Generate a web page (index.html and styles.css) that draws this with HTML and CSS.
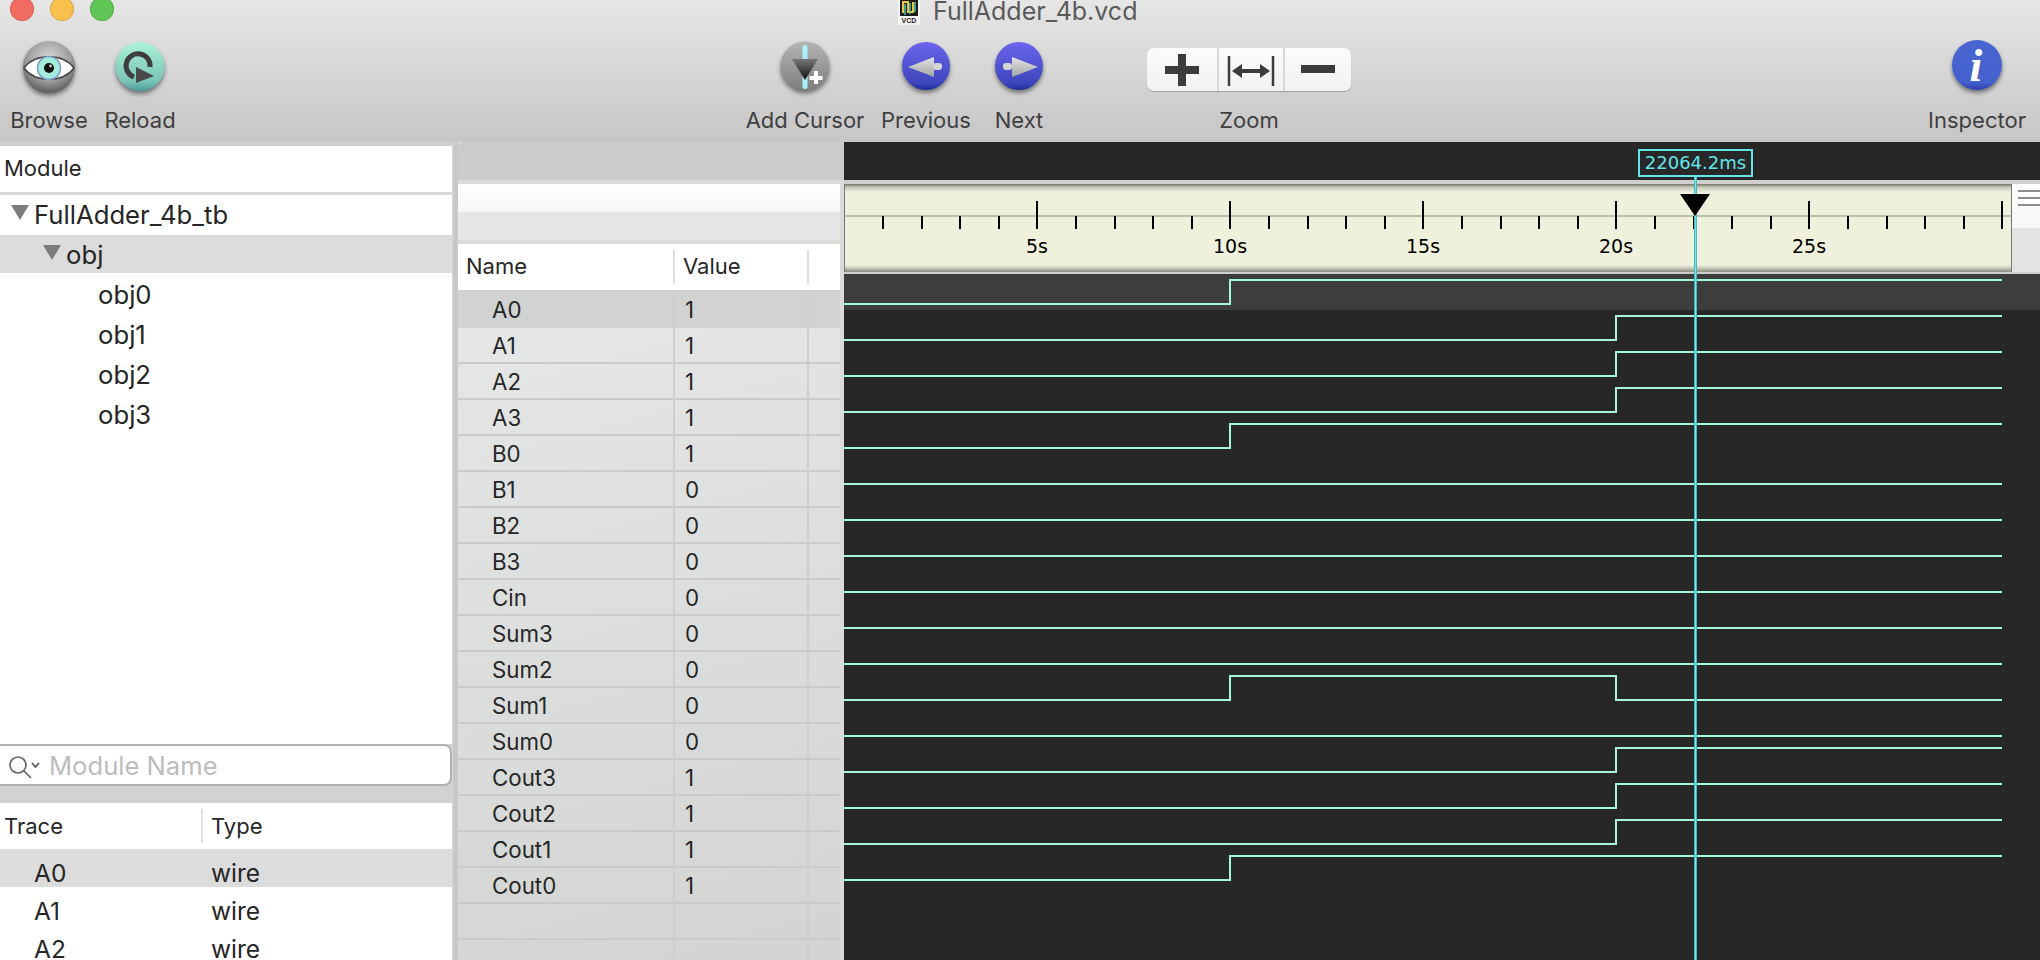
FILE: index.html
```html
<!DOCTYPE html>
<html lang="en">

<head>
    <meta charset="UTF-8">
    <meta name="viewport" content="width=device-width, initial-scale=1.0">
    <title>FullAdder_4b.vcd</title>
    <link rel="stylesheet" href="styles.css">
</head>

<body>
    <header class="toolbar">
        <div class="titlebar">
            <div class="lights">
                <span class="light red"></span>
                <span class="light yellow"></span>
                <span class="light green"></span>
            </div>
            <svg class="doc-icon" width="22" height="25" viewBox="0 0 22 25">
                <rect width="22" height="25" fill="#f4f4f4" />
                <rect x="2" y="0" width="18" height="16" fill="#1c1c1c" />
                <path d="M5 13V2H10V12H15V2" fill="none" stroke="#e8c83c" stroke-width="2" />
                <path d="M7 15V4M12 14V3M17 12V2" fill="none" stroke="#4fc4c0" stroke-width="1.5" />
                <text x="11" y="23" class="doc-text">VCD</text>
            </svg>
            <span class="title">FullAdder_4b.vcd</span>
        </div>

        <div class="tools">
            <div class="tool browse">
                <svg width="60" height="60" viewBox="0 0 60 60">
                    <defs>
                        <radialGradient id="ball" cx="50%" cy="35%" r="65%">
                            <stop offset="0" stop-color="#d8d8d8" />
                            <stop offset="0.65" stop-color="#9c9c9c" />
                            <stop offset="1" stop-color="#5c5c5c" />
                        </radialGradient>
                    </defs>
                    <circle cx="30" cy="27" r="26" fill="url(#ball)" class="shadow" />
                    <path d="M5 28C16 13 44 13 55 28C44 43 16 43 5 28Z" fill="#fff" stroke="#444" stroke-width="1.5" />
                    <circle cx="30" cy="28" r="11.5" fill="#a4ecdc" stroke="#7c9cc8" stroke-width="1.5" />
                    <circle cx="30" cy="28" r="5" fill="#111" />
                    <circle cx="31.5" cy="26" r="1.4" fill="#ccc" />
                </svg>
                <span>Browse</span>
            </div>
            <div class="tool reload">
                <svg width="60" height="60" viewBox="0 0 60 60">
                    <defs>
                        <linearGradient id="teal" x1="0" y1="0" x2="0" y2="1">
                            <stop offset="0" stop-color="#aef2da" />
                            <stop offset="0.8" stop-color="#78c4b4" />
                            <stop offset="1" stop-color="#4e9a9c" />
                        </linearGradient>
                    </defs>
                    <circle cx="30" cy="26.5" r="24.5" fill="url(#teal)" class="shadow" />
                    <path d="M40 27A12 12 0 1 0 24 37" fill="none" stroke="#3e3e3e" stroke-width="5" />
                    <path d="M26 27L44 36L26 43Z" fill="#4a4a4a" />
                </svg>
                <span>Reload</span>
            </div>
            <div class="tool add-cursor">
                <svg width="60" height="60" viewBox="0 0 60 60">
                    <defs>
                        <linearGradient id="grey" x1="0" y1="0" x2="0" y2="1">
                            <stop offset="0" stop-color="#b4b4b4" />
                            <stop offset="1" stop-color="#7e7e7e" />
                        </linearGradient>
                        <linearGradient id="arrow" x1="0" y1="0" x2="0" y2="1">
                            <stop offset="0" stop-color="#777" />
                            <stop offset="1" stop-color="#111" />
                        </linearGradient>
                    </defs>
                    <circle cx="30" cy="26" r="24.5" fill="url(#grey)" class="shadow" />
                    <rect x="27.5" y="5" width="5" height="44" rx="2.5" fill="#a6f2fa" />
                    <path d="M17 19H43L30 40Z" fill="url(#arrow)" />
                    <path d="M41 31V44M34.5 38H47.5" stroke="#fff" stroke-width="4" />
                </svg>
                <span>Add Cursor</span>
            </div>
            <div class="tool previous">
                <svg width="60" height="60" viewBox="0 0 60 60">
                    <defs>
                        <linearGradient id="blue" x1="0" y1="0" x2="0" y2="1">
                            <stop offset="0" stop-color="#6c64ee" />
                            <stop offset="0.85" stop-color="#3e46bc" />
                            <stop offset="1" stop-color="#1a2c9c" />
                        </linearGradient>
                        <linearGradient id="silver" x1="0" y1="0" x2="0" y2="1">
                            <stop offset="0" stop-color="#e4e4e4" />
                            <stop offset="1" stop-color="#a4a4a4" />
                        </linearGradient>
                    </defs>
                    <circle cx="30" cy="26" r="24" fill="url(#blue)" class="shadow" />
                    <path d="M12 27L38 17V37Z" fill="url(#silver)" />
                    <rect x="37" y="23" width="9" height="7" rx="3" fill="#d4d4d4" />
                </svg>
                <span>Previous</span>
            </div>
            <div class="tool next">
                <svg width="60" height="60" viewBox="0 0 60 60">
                    <circle cx="30" cy="26" r="24" fill="url(#blue)" class="shadow" />
                    <path d="M49 27L23 17V37Z" fill="url(#silver)" />
                    <rect x="14" y="23" width="9" height="7" rx="3" fill="#d4d4d4" />
                </svg>
                <span>Next</span>
            </div>
            <div class="tool zoom">
                <div class="zoom-group">
                    <div class="zoom-btn plus">
                        <svg width="34" height="34" viewBox="0 0 34 34">
                            <path d="M17 1V33M0 17H34" stroke="#3c3c3c" stroke-width="8" />
                        </svg>
                    </div>
                    <div class="zoom-btn fit">
                        <svg width="50" height="34" viewBox="0 0 50 34">
                            <path d="M3 3V33M47 3V33" stroke="#3c3c3c" stroke-width="2.5" fill="none" />
                            <path d="M14 18H36" stroke="#3c3c3c" stroke-width="4" fill="none" />
                            <path d="M6 18L16 11V25ZM44 18L34 11V25Z" fill="#3c3c3c" />
                        </svg>
                    </div>
                    <div class="zoom-btn minus">
                        <svg width="34" height="34" viewBox="0 0 34 34">
                            <path d="M0 16H34" stroke="#3c3c3c" stroke-width="8" />
                        </svg>
                    </div>
                </div>
                <span>Zoom</span>
            </div>
            <div class="tool inspector">
                <svg width="60" height="60" viewBox="0 0 60 60">
                    <defs>
                        <linearGradient id="info" x1="0" y1="0" x2="0" y2="1">
                            <stop offset="0" stop-color="#4866d2" />
                            <stop offset="0.85" stop-color="#4460cc" />
                            <stop offset="1" stop-color="#2a3eae" />
                        </linearGradient>
                    </defs>
                    <circle cx="30" cy="25" r="25" fill="url(#info)" class="shadow" />
                    <text x="29" y="41" class="info-text">i</text>
                </svg>
                <span>Inspector</span>
            </div>
        </div>
    </header>

    <main class="main">
        <section class="left">
            <div class="head module-head">Module</div>
            <div class="tree">
                <div class="tree-row level0"><span class="caret"></span>FullAdder_4b_tb</div>
                <div class="tree-row level1 selected"><span class="caret"></span>obj</div>
                <div class="tree-row level2">obj0</div>
                <div class="tree-row level2">obj1</div>
                <div class="tree-row level2">obj2</div>
                <div class="tree-row level2">obj3</div>
            </div>
            <div class="search">
                <svg width="34" height="26" viewBox="0 0 34 26">
                    <circle cx="11" cy="11" r="8" fill="none" stroke="#666" stroke-width="1.7" />
                    <path d="M17 17L24 24" stroke="#666" stroke-width="1.7" />
                    <path d="M25 9L28.5 13L32 9" fill="none" stroke="#555" stroke-width="1.7" />
                </svg>
                <span>Module Name</span>
            </div>
            <div class="trace-table">
                <div class="head trace-head"><span>Trace</span><span class="type-col">Type</span></div>
                <div class="trace-row selected"><span>A0</span><span>wire</span></div>
                <div class="trace-row"><span>A1</span><span>wire</span></div>
                <div class="trace-row"><span>A2</span><span>wire</span></div>
            </div>
        </section>

        <div class="splitter"></div>

        <section class="middle">
            <div class="mid-top"></div>
            <div class="mid-shine"></div>
            <div class="mid-plain"></div>
            <div class="names">
                <div class="name-head">
                    <span>Name</span><span>Value</span><span></span>
                </div>
                <div class="name-body">
                    <div class="name-row selected"><span>A0</span><span>1</span><span></span></div>
                    <div class="name-row"><span>A1</span><span>1</span><span></span></div>
                    <div class="name-row"><span>A2</span><span>1</span><span></span></div>
                    <div class="name-row"><span>A3</span><span>1</span><span></span></div>
                    <div class="name-row"><span>B0</span><span>1</span><span></span></div>
                    <div class="name-row"><span>B1</span><span>0</span><span></span></div>
                    <div class="name-row"><span>B2</span><span>0</span><span></span></div>
                    <div class="name-row"><span>B3</span><span>0</span><span></span></div>
                    <div class="name-row"><span>Cin</span><span>0</span><span></span></div>
                    <div class="name-row"><span>Sum3</span><span>0</span><span></span></div>
                    <div class="name-row"><span>Sum2</span><span>0</span><span></span></div>
                    <div class="name-row"><span>Sum1</span><span>0</span><span></span></div>
                    <div class="name-row"><span>Sum0</span><span>0</span><span></span></div>
                    <div class="name-row"><span>Cout3</span><span>1</span><span></span></div>
                    <div class="name-row"><span>Cout2</span><span>1</span><span></span></div>
                    <div class="name-row"><span>Cout1</span><span>1</span><span></span></div>
                    <div class="name-row"><span>Cout0</span><span>1</span><span></span></div>
                    <div class="name-row"><span></span><span></span><span></span></div>
                    <div class="name-row"><span></span><span></span><span></span></div>
                </div>
            </div>
        </section>

        <section class="right">
            <div class="band">
                <div class="cursor-label">22064.2ms</div>
            </div>
            <div class="ruler-row">
                <div class="ruler">
                    <svg width="1166" height="86" viewBox="0 0 1166 86">
                        <path d="M0 32H1166" stroke="#bcbcb0" stroke-width="2" />
                        <!-- мелкие деления через 1s, крупные через 5s -->
                        <path class="tick" d="M38 32V45M77 32V45M115 32V45M154 32V45M231 32V45M270 32V45M308 32V45M347 32V45M424 32V45M463 32V45M501 32V45M540 32V45M617 32V45M656 32V45M694 32V45M733 32V45M810 32V45M849 32V45M887 32V45M926 32V45M1003 32V45M1042 32V45M1080 32V45M1119 32V45" />
                        <path class="tick" d="M192 17V45M385 17V45M578 17V45M771 17V45M964 17V45M1157 17V45" />
                        <text x="192" y="69" class="ruler-text">5s</text>
                        <text x="385" y="69" class="ruler-text">10s</text>
                        <text x="578" y="69" class="ruler-text">15s</text>
                        <text x="771" y="69" class="ruler-text">20s</text>
                        <text x="964" y="69" class="ruler-text">25s</text>
                    </svg>
                </div>
                <div class="ruler-side">
                    <span></span><span></span><span></span>
                </div>
            </div>
            <div class="waves">
                <svg width="1196" height="686" viewBox="0 0 1196 686">
                    <rect width="1196" height="36" fill="#3d3d3d" />
                    <path class="wave" d="M0 30H386V6H1158" />
                    <path class="wave" d="M0 66H772V42H1158" />
                    <path class="wave" d="M0 102H772V78H1158" />
                    <path class="wave" d="M0 138H772V114H1158" />
                    <path class="wave" d="M0 174H386V150H1158" />
                    <path class="wave" d="M0 210H1158" />
                    <path class="wave" d="M0 246H1158" />
                    <path class="wave" d="M0 282H1158" />
                    <path class="wave" d="M0 318H1158" />
                    <path class="wave" d="M0 354H1158" />
                    <path class="wave" d="M0 390H1158" />
                    <path class="wave" d="M0 426H386V402H772V426H1158" />
                    <path class="wave" d="M0 462H1158" />
                    <path class="wave" d="M0 498H772V474H1158" />
                    <path class="wave" d="M0 534H772V510H1158" />
                    <path class="wave" d="M0 570H772V546H1158" />
                    <path class="wave" d="M0 606H386V582H1158" />
                </svg>
            </div>
            <div class="cursor-line"></div>
            <div class="cursor-head"></div>
        </section>
    </main>
</body>

</html>
```
FILE: styles.css
```css
* {
    box-sizing: border-box;
}

html,
body {
    margin: 0;
    height: 100%;
    overflow: hidden;
}

body {
    width: 2040px;
    height: 960px;
    font-family: "Inter", "Liberation Sans", sans-serif;
    font-size: 22px;
    color: #262626;
    background-color: #cfcfcf;
    display: flex;
    flex-direction: column;
}

/* toolbar */
.toolbar {
    height: 142px;
    flex: none;
    background: linear-gradient(#e6e6e6, #c6c6c6);
}

.titlebar {
    height: 24px;
    display: flex;
    align-items: flex-start;
    position: relative;
}

.lights {
    display: flex;
    gap: 16px;
    margin-left: 10px;
    margin-top: -3px;
}

.light {
    width: 24px;
    height: 24px;
    border-radius: 50%;
    border: 1px solid rgba(0, 0, 0, 0.12);
}

.red {
    background-color: #f26d61;
}

.yellow {
    background-color: #f9c04e;
}

.green {
    background-color: #60c655;
}

.doc-icon {
    margin-left: 784px;
}

.doc-text {
    font-family: "Liberation Sans", sans-serif;
    font-size: 7px;
    font-weight: bold;
    text-anchor: middle;
    fill: #222;
}

.title {
    margin-left: 13px;
    font-size: 25px;
    line-height: 22px;
    color: #5a5a5a;
}

.tools {
    display: flex;
    height: 118px;
}

.tool {
    display: flex;
    flex: none;
    flex-direction: column;
    align-items: center;
    color: #404040;
    font-size: 22px;
    white-space: nowrap;
}

.tool svg {
    display: block;
    flex: none;
}

.tool > svg {
    margin-top: 16px;
    height: 60px;
}

.tool > span {
    margin-top: 7px;
    line-height: 26px;
}

.shadow {
    filter: drop-shadow(0 3px 2px rgba(0, 0, 0, 0.45));
}

.browse {
    width: 98px;
}

.reload {
    width: 84px;
}

.add-cursor {
    width: 118px;
    margin-left: 564px;
}

.previous {
    width: 124px;
}

.next {
    width: 62px;
}

.zoom {
    width: 204px;
    margin-left: 97px;
}

.inspector {
    width: 114px;
    margin-left: auto;
    margin-right: 6px;
}

.info-text {
    font-family: "Liberation Serif", serif;
    font-style: italic;
    font-weight: bold;
    font-size: 46px;
    fill: #fff;
    text-anchor: middle;
}

.zoom-group {
    display: flex;
    width: 204px;
    height: 43px;
    margin-top: 24px;
    margin-bottom: 9px;
    background: linear-gradient(#fbfbfb, #f2f2f2);
    border-radius: 7px;
    box-shadow: 0 1px 1px rgba(0, 0, 0, 0.25);
}

.zoom-btn {
    display: flex;
    align-items: center;
    justify-content: center;
    border-right: 2px solid #d8d8d8;
}

.plus {
    width: 72px;
}

.fit {
    width: 66px;
}

.minus {
    flex: 1;
    border-right: none;
}

/* main panes */
.main {
    flex: 1;
    display: flex;
    min-height: 0;
}

.left {
    width: 452px;
    margin-top: 4px;
    display: flex;
    flex-direction: column;
    background-color: #d2d2d2;
}

.head {
    height: 46px;
    background-color: #fff;
    display: flex;
    align-items: center;
    padding-left: 4px;
    font-size: 22px;
}

.module-head {
    flex: none;
    padding-bottom: 2px;
}

.tree {
    height: 552px;
    flex: none;
    background-color: #fff;
    border-top: 3px solid #d8d8d8;
    font-size: 25.7px;
    padding-top: 0;
}

.tree-row {
    height: 40px;
    display: flex;
    align-items: center;
    white-space: nowrap;
    padding-bottom: 2px;
}

.tree-row.selected {
    height: 38px;
    margin-bottom: 2px;
    padding-bottom: 0;
    background-color: #dcdcdc;
}

.caret {
    width: 0;
    height: 0;
    border-left: 9px solid transparent;
    border-right: 9px solid transparent;
    border-top: 15px solid #7c7c7c;
    margin-right: 5px;
    margin-top: -4px;
}

.level0 {
    padding-left: 11px;
}

.level1 {
    padding-left: 43px;
}

.level2 {
    padding-left: 98px;
}

.search {
    height: 42px;
    flex: none;
    margin-left: -6px;
    padding-left: 11px;
    display: flex;
    align-items: center;
    gap: 8px;
    background-color: #fff;
    border: 2px solid #b2b2b2;
    border-radius: 8px;
    font-size: 25.6px;
    color: #bcbcbc;
}

.search svg {
    margin-top: 4px;
}

.trace-table {
    flex: 1;
    margin-top: 17px;
    background-color: #fff;
}

.trace-head {
    position: relative;
}

.trace-head span:first-child {
    width: 199px;
    border-right: 2px solid #e0e0e0;
    line-height: 34px;
}

.type-col {
    margin-left: 8px;
}

.trace-row {
    height: 38px;
    display: flex;
    align-items: center;
    padding-left: 34px;
    padding-top: 10px;
    font-size: 24.5px;
}

.trace-row.selected {
    background-color: #dcdcdc;
}

.trace-row span:first-child {
    width: 177px;
}

.splitter {
    width: 6px;
    background-color: #c8c8c8;
    border-left: 1px solid #d8d8d8;
}

.middle {
    width: 386px;
    padding-right: 4px;
    display: flex;
    flex-direction: column;
    background-color: #dbdbdb;
}

.mid-top {
    height: 40px;
    margin-right: -4px;
    background-color: #cbcbcb;
    border-top-left-radius: 6px;
}

.mid-shine {
    height: 29px;
    margin-top: 4px;
    background: linear-gradient(#fff, #f6f6f6);
}

.mid-plain {
    height: 29px;
    background-color: #e5e5e5;
}

.names {
    flex: 1;
    margin-top: 4px;
}

.name-head,
.name-row {
    display: grid;
    grid-template-columns: 217px 134px 31px;
}

.name-head {
    height: 46px;
    background-color: #fff;
    align-items: center;
    font-size: 22px;
}

.name-head span {
    height: 34px;
    line-height: 33px;
    padding-left: 8px;
    border-right: 2px solid #dedede;
}

.name-head span:last-child {
    border-right: none;
}

.name-body {
    height: 670px;
    overflow: hidden;
    background: linear-gradient(165deg, #e6e8e7, #d9dcdb 60%, #d3d4d2);
}

.name-row {
    height: 36px;
    border-bottom: 2px solid #cacaca;
    font-size: 22.3px;
    line-height: 36px;
}

.name-row.selected {
    height: 38px;
    line-height: 40px;
    background-color: #d0d3d2;
    border-bottom: none;
}

.name-row span {
    border-right: 2px solid #cecece;
    padding-left: 10px;
}

.name-row span:first-child {
    padding-left: 34px;
}

.name-row span:last-child {
    border-right: none;
}

/* wave view */
.right {
    flex: 1;
    position: relative;
    display: flex;
    flex-direction: column;
    min-width: 0;
}

.band {
    height: 38px;
    flex: none;
    background-color: #272727;
    padding-left: 794px;
    padding-top: 7px;
}

.cursor-label {
    width: 115px;
    height: 28px;
    border: 2px solid #62e6ea;
    background-color: #272727;
    color: #62e6ea;
    font-family: "DejaVu Sans", sans-serif;
    font-size: 18px;
    line-height: 24px;
    text-align: center;
}

.ruler-row {
    display: flex;
    height: 88px;
    margin-top: 4px;
    flex: none;
}

.ruler {
    width: 1168px;
    border-left: 1px solid #777;
    border-right: 1px solid #777;
    background: linear-gradient(#72726a, #c4c4b4 3px, #f0f1dd 8px, #f0f1dd 81px, #bcbcae 85px, #8a8a82);
}

.ruler svg {
    display: block;
}

.tick {
    stroke: #000;
    stroke-width: 2;
    fill: none;
}

.ruler-text {
    font-family: "DejaVu Sans", sans-serif;
    font-size: 19px;
    text-anchor: middle;
    fill: #000;
}

.ruler-side {
    flex: 1;
    display: flex;
    flex-direction: column;
    gap: 4px;
    padding: 6px 0 0 6px;
    background: linear-gradient(#fff, #f6f6f6 44px, #e4e4e4 44px);
}

.ruler-side span {
    height: 2px;
    background-color: #8c8c8c;
    margin-bottom: 1px;
}

.waves {
    flex: 1;
    margin-top: 2px;
    background-color: #272727;
    overflow: hidden;
}

.waves svg {
    display: block;
}

.wave {
    fill: none;
    stroke: #a4f6dc;
    stroke-width: 2;
}

/* cursor sits over the ruler and the waves */
.cursor-line {
    position: absolute;
    left: 850px;
    top: 35px;
    bottom: 0;
    width: 3px;
    background: linear-gradient(90deg, #3f9ea2, #66eaee, #3f9ea2);
}

.cursor-head {
    position: absolute;
    left: 836px;
    top: 52px;
    width: 0;
    height: 0;
    border-left: 15.5px solid transparent;
    border-right: 15.5px solid transparent;
    border-top: 22px solid #000;
}
```
